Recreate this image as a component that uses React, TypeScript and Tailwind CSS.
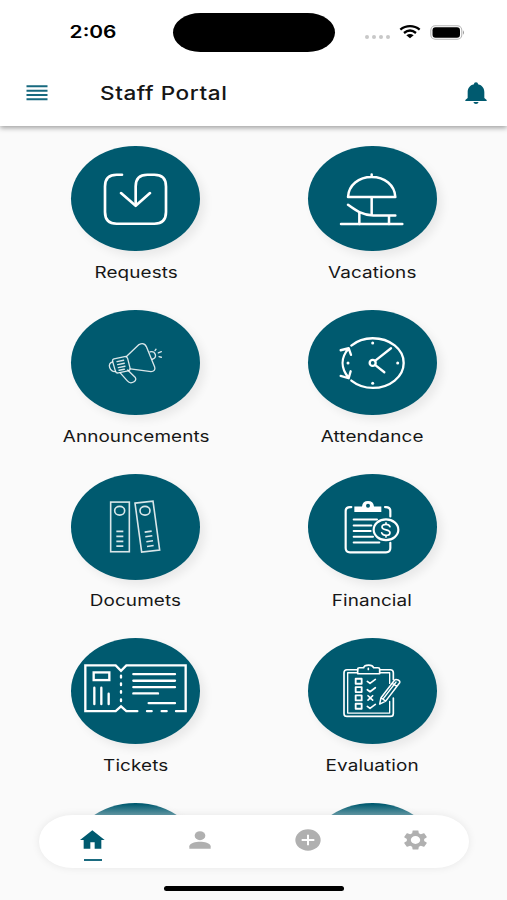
import React from 'react';

const RequestsIcon = () => (
  <svg viewBox="64 30 387 316" className="w-full h-full" fill="none" stroke="white" strokeWidth="8" strokeLinecap="round" strokeLinejoin="round">
    <path d="M217 116h-16q-35 0-35 35v77q0 35 35 35h113q35 0 35-35v-77q0-35-35-35h-21q-35 0-35 35v56" />
    <path d="M214 171l44 38 43-38" />
  </svg>
);

const VacationsIcon = () => (
  <svg viewBox="54 30 387 316" className="w-full h-full" fill="none" stroke="white" strokeWidth="7.5" strokeLinecap="round" strokeLinejoin="round">
    <path d="M174 183c2-36 32-60 71-60s69 24 71 60zM245 115v8M245 183v53" />
    <path d="M174 206c22 16 40 30 76 32h66M208 230v34M297 240v24" />
    <path d="M153 264h184" />
  </svg>
);

const AnnouncementsIcon = () => (
  <svg viewBox="64 28.5 387 316" className="w-full h-full" fill="none" stroke="white" strokeOpacity="0.85" strokeWidth="4" strokeLinecap="round" strokeLinejoin="round">
    <path d="M231 167l37-35c10-5 18-2 22 6l25 61c3 9-3 14-11 14l-62-8" />
    <path d="M193 175l32-7c5-1 8 2 9 6l7 28c1 5-1 8-6 9l-29 6c-5 1-8-1-9-6l-8-28c-1-4 0-7 4-8z" />
    <path d="M189 184c-8 2-12 8-9 17s11 14 18 11M202 183l20-4M204 192l20-4M206 201l20-4M208 209l16-3" />
    <path d="M211 216l22 25c5 6 11 7 17 4s11-8 7-14l-23-23" />
    <path d="M301 154c8-2 14 2 16 8s-1 12-9 14M316 150l3-4M326 157l9-4M328 168l7 2" />
  </svg>
);

const AttendanceIcon = () => (
  <svg viewBox="54 28.5 387 316" className="w-full h-full" fill="none" stroke="white" strokeWidth="7" strokeLinecap="round" strokeLinejoin="round">
    <path d="M184 135c18-15 39-22 64-22 52 0 93 33 93 74s-41 75-93 75c-25 0-46-8-64-22" />
    <path d="M176 144c-24 27-24 59 0 88M152 149l24-6 7 20M152 226l24 7 6-21" />
    <circle cx="248" cy="187" r="9" />
    <path d="M256 180l47-37M255 193l28 22" />
    <g fill="white" stroke="none">
      <circle cx="248" cy="127" r="4.5" />
      <circle cx="248" cy="248" r="4.5" />
      <circle cx="323" cy="187" r="4.5" />
      <circle cx="174" cy="187" r="4.5" />
    </g>
  </svg>
);

const DocumentsIcon = () => (
  <svg viewBox="64 27 387 316" className="w-full h-full" fill="none" stroke="white" strokeOpacity="0.85" strokeWidth="4.8">
    <rect x="183" y="111" width="56" height="149" />
    <ellipse cx="210" cy="137" rx="15" ry="13" />
    <path d="M200 199h21M200 214h21M200 229h21M200 243h21" />
    <path d="M256 114l54-6 20 147-54 6z" />
    <ellipse cx="286" cy="137" rx="15" ry="13" />
    <path d="M285 201l21-3M287 215l21-3M290 230l20-3M292 244l20-3" />
  </svg>
);

const FinancialIcon = () => (
  <svg viewBox="54 27 387 316" className="w-full h-full" fill="none" stroke="white" strokeWidth="6.5" strokeLinecap="round" strokeLinejoin="round">
    <path d="M184 126h-4q-13 0-13 12v111q0 13 13 13h108q13 0 13-13v-16M285 126h3q13 0 13 12v16" />
    <path d="M193 124h23q2-16 18-16t18 16h22v17h-81z" fill="white" stroke="none" />
    <circle cx="234" cy="122" r="6" fill="#005a6f" stroke="none" />
    <path d="M191 163h70M191 181h53M191 198h51M191 215h58M191 232h77" strokeWidth="6" />
    <ellipse cx="288" cy="194" rx="37" ry="31" />
    <path d="M300 185c-2-6-6-7-12-7-8 0-12 3-12 8 0 12 24 5 24 17 0 5-5 8-12 8s-11-3-13-8M288 173v5M288 211v5" strokeWidth="5" />
  </svg>
);

const TicketsIcon = () => (
  <svg viewBox="64 25 387 316" className="w-full h-full" fill="none" stroke="white" strokeWidth="7" strokeLinecap="round">
    <path d="M263 244h-33l-16-14-16 14h-91V107h91l16 16 16-16h178v137h-29M292 244h14M336 244h15" />
    <rect x="132" y="128" width="47" height="23" />
    <path d="M134 174v49M155 174v49M177 192v31" />
    <path d="M214 138v5M214 161v5M214 184v5M214 209v5" />
    <path d="M251 133h125M251 153h125M251 172h125M251 191h74M297 220h79" />
  </svg>
);

const EvaluationIcon = () => (
  <svg viewBox="54 25 387 316" className="w-full h-full" fill="none" stroke="white" strokeWidth="5" strokeLinecap="round" strokeLinejoin="round">
    <path d="M203 120h-32q-9 0-9 9v122q0 9 9 9h130q9 0 9-9v-46M270 120h31q9 0 9 9v20" />
    <path d="M200 129h-27v121h126v-35M271 129h28v32" strokeWidth="4" />
    <path d="M203 132v-14q0-4 5-4h13c1-5 6-8 15-8s13 3 15 8h13q5 0 5 4v14zM235 116v3" />
    <path d="M197 147h18v15h-18zM197 172h18v15h-18zM197 197h18v15h-18zM197 222h18v15h-18z" strokeWidth="5.5" />
    <path d="M232 155l8 6 16-12M232 180l8 6 16-12M234 198l14 13M248 198l-14 13M232 230l8 6 16-12" />
    <path d="M269 223l4-19 41-53c4-5 19 2 15 8l-42 55zM273 204l14 10M281 205l37-48M306 161l15 9" strokeWidth="4.5" />
  </svg>
);

const menuItems = [
  { label: 'Requests', icon: <RequestsIcon /> },
  { label: 'Vacations', icon: <VacationsIcon /> },
  { label: 'Announcements', icon: <AnnouncementsIcon /> },
  { label: 'Attendance', icon: <AttendanceIcon /> },
  { label: 'Documets', icon: <DocumentsIcon /> },
  { label: 'Financial', icon: <FinancialIcon /> },
  { label: 'Tickets', icon: <TicketsIcon /> },
  { label: 'Evaluation', icon: <EvaluationIcon /> },
  { label: '', icon: null },
  { label: '', icon: null },
];

const StatusBar = () => (
  <div className="h-16 flex items-center pl-[69px] pr-[42px]">
    <div className="w-[104px]">
      <span className="inline-block origin-left scale-x-[1.23] pl-[0.5px] text-[17px] leading-none font-semibold text-black">2:06</span>
    </div>
    <div className="w-[162px] h-[39px] rounded-[28px/20px] bg-black"></div>
    <div className="ml-auto flex items-center gap-[9px]">
      <div className="flex gap-[3px] pt-[9px]">
        <span className="w-1 h-1 rounded-full bg-[#c8c8c8]"></span>
        <span className="w-1 h-1 rounded-full bg-[#c8c8c8]"></span>
        <span className="w-1 h-1 rounded-full bg-[#c8c8c8]"></span>
        <span className="w-1 h-1 rounded-full bg-[#c8c8c8]"></span>
      </div>
      <svg width="22" height="14" viewBox="0 0 66 42" fill="none" stroke="black" strokeWidth="7">
        <path d="M4 14c17-14 41-14 58 0M15 24c11-9 25-9 36 0" />
        <path d="M22 31q11-8 22 0l-11 9z" fill="black" stroke="none" />
      </svg>
      <svg width="35" height="15" viewBox="0 0 35 15">
        <rect x="0.8" y="0.8" width="31" height="13.4" rx="4.5" fill="none" stroke="#b5b5b5" strokeWidth="1.1" />
        <rect x="2.5" y="2.3" width="27.5" height="10.4" rx="3" fill="black" />
        <path d="M33 5.2q2 2.3 0 4.6z" fill="#999" />
      </svg>
    </div>
  </div>
);

const Header = () => (
  <header className="relative z-10 h-[126px] shrink-0 bg-white shadow-[0_2px_5px_rgba(0,0,0,0.36)]">
    <StatusBar />
    <div className="h-[58px] flex items-center pl-[26px] pr-5">
      <svg width="22" height="16" viewBox="0 0 22 16" fill="#17697f">
        <path d="M0.5 0.3h21v2h-21zM0.5 4.7h21v2h-21zM0.5 9h21v2h-21zM0.5 13.3h21v2h-21z" />
      </svg>
      <h1 className="ml-[52px] pt-px origin-left scale-x-[1.22] text-[18.5px] leading-none tracking-[0.45px] font-medium text-[#161616]">Staff Portal</h1>
      <svg className="ml-auto" width="22" height="22" viewBox="0 0 66 66" fill="#005a6f">
        <path d="M33 1c4 0 6 2 6 6 13 3 19 12 19 24v17l7 6v3H1v-3l7-6V31C8 19 14 10 27 7c0-4 2-6 6-6zM25 60h16q-2 6-8 6t-8-6z" />
      </svg>
    </div>
  </header>
);

const BottomNav = () => (
  <nav className="absolute left-[39px] right-[38px] top-[815px] h-[53px] rounded-[34px/27px] bg-white shadow-[0_0_9px_rgba(0,0,0,0.08)] grid grid-cols-4">
    <div className="flex flex-col items-center pt-[15px]">
      <svg width="25" height="20" viewBox="0 0 75 60" fill="#005a6f">
        <path d="M37 1L74 30H64v26H44V37H31v19H11V30H0z" />
      </svg>
      <div className="w-[18px] h-[2px] mt-[9px] bg-[#1b6b80]"></div>
    </div>
    <div className="flex justify-center pt-4">
      <svg width="22" height="18" viewBox="0 0 66 54" fill="#b0b0b0">
        <ellipse cx="33" cy="14" rx="16" ry="13.5" />
        <path d="M1 53V46c0-10 20-14 32-14s32 4 32 14v7z" />
      </svg>
    </div>
    <div className="flex justify-center pt-[14px]">
      <svg width="26" height="22" viewBox="0 0 78 66">
        <ellipse cx="39" cy="33" rx="38" ry="32" fill="#b0b0b0" />
        <path d="M39 17v32M20 33h38" stroke="white" strokeWidth="6" />
      </svg>
    </div>
    <div className="flex justify-center pt-[13px]">
      <svg width="29" height="24" viewBox="0 0 24 24" preserveAspectRatio="none" fill="#b0b0b0">
        <path d="M19.14 12.94c.04-.3.06-.61.06-.94 0-.32-.02-.64-.07-.94l2.03-1.58c.18-.14.23-.41.12-.61l-1.92-3.32c-.12-.22-.37-.29-.59-.22l-2.39.96c-.5-.38-1.03-.7-1.62-.94l-.36-2.54c-.04-.24-.24-.41-.48-.41h-3.84c-.24 0-.43.17-.47.41l-.36 2.54c-.59.24-1.13.57-1.62.94l-2.39-.96c-.22-.08-.47 0-.59.22L2.74 8.87c-.12.21-.08.47.12.61l2.03 1.58c-.05.3-.09.63-.09.94s.02.64.07.94l-2.03 1.58c-.18.14-.23.41-.12.61l1.92 3.32c.12.22.37.29.59.22l2.39-.96c.5.38 1.03.7 1.62.94l.36 2.54c.05.24.24.41.48.41h3.84c.24 0 .44-.17.47-.41l.36-2.54c.59-.24 1.13-.56 1.62-.94l2.39.96c.22.08.47 0 .59-.22l1.92-3.32c.12-.22.07-.47-.12-.61l-2.01-1.58zM12 15.9c-2.1 0-3.9-1.8-3.9-3.9s1.8-3.9 3.9-3.9 3.9 1.8 3.9 3.9-1.8 3.9-3.9 3.9z" />
      </svg>
    </div>
  </nav>
);

const App = () => {
  return (
    <div className="relative w-full h-[900px] overflow-hidden flex flex-col bg-[#fafafa] font-['Inter',sans-serif]">
      <Header />

      <main className="h-[715px] shrink-0 overflow-hidden grid grid-cols-2 auto-rows-[164.3px] pt-[19.6px] pl-[17.5px] pr-[16.5px]">
        {menuItems.map((item, index) => (
          <div key={index} className="flex flex-col items-center">
            <div className="w-[129px] h-[105.5px] shrink-0 rounded-[50%] bg-[#005a6f] shadow-[5px_5px_10px_rgba(0,0,0,0.07)]">
              {item.icon}
            </div>
            <span className="mt-[11.7px] scale-x-[1.22] text-[15.5px] leading-5 tracking-[0.08px] text-[#161616]">{item.label}</span>
          </div>
        ))}
      </main>

      {/* Fade under the floating nav */}
      <div className="absolute inset-x-0 top-[804px] h-[14px] bg-gradient-to-b from-[#fafafa]/0 to-[#fafafa]/50"></div>
      <BottomNav />

      {/* Home indicator */}
      <div className="absolute left-[164px] top-[886px] w-[180px] h-[5px] rounded-full bg-black"></div>
    </div>
  );
};

export default App;
